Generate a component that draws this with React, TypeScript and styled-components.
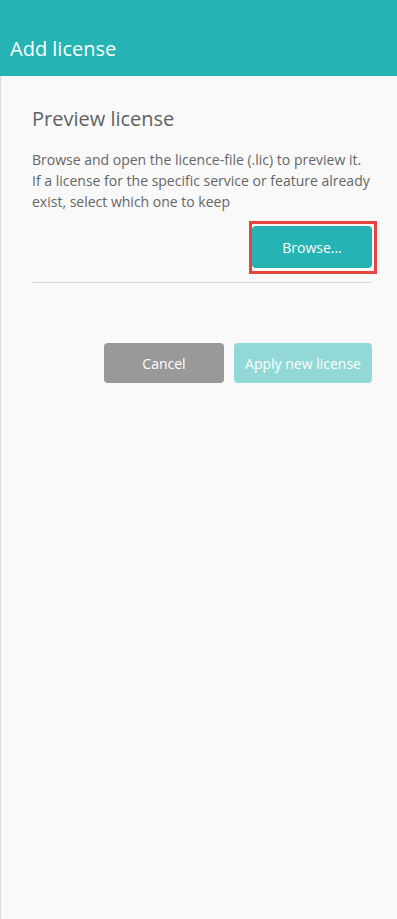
import React from "react";
import styled, { createGlobalStyle } from "styled-components";

const Global = createGlobalStyle`
  html, body { margin: 0; padding: 0; background: #f9f9f9; }
  body { font-family: "Open Sans", "Noto Sans", sans-serif; }
  * { box-sizing: border-box; }
`;

const Page = styled.div`
  display: flex;
  flex-direction: column;
  min-height: 919px;
`;

const Header = styled.header`
  height: 76px;
  background: #26b3b3;
  display: flex;
  align-items: flex-end;
  padding: 0 0 13px 10px;
`;

const Title = styled.h1`
  margin: 0;
  font-size: 20px;
  line-height: 28px;
  font-weight: 400;
  color: #ffffff;
`;

const Main = styled.main`
  flex: 1;
  background: #f9f9f9;
  border-left: 1px solid #dcdcdc;
  padding: 29px 25px 0 30px;
  display: flex;
  flex-direction: column;
`;

const Heading = styled.h2`
  margin: 0 0 0 1px;
  font-size: 20px;
  line-height: 28px;
  font-weight: 400;
  color: #5f6166;
`;

const Description = styled.p`
  margin: 16px 0 0 1px;
  font-size: 14px;
  line-height: 21px;
  color: #666666;
`;

const ActionRow = styled.div<{ $top: number }>`
  display: flex;
  justify-content: flex-end;
  gap: 10px;
  margin-top: ${(p) => p.$top}px;
`;

const Highlight = styled.div`
  border: 3px solid #e5453f;
  padding: 2px 2px 3px 0;
  margin-right: -5px;
  display: flex;
`;

const Button = styled.button<{ $variant: "primary" | "secondary" | "disabled"; $w: number; $h: number }>`
  width: ${(p) => p.$w}px;
  height: ${(p) => p.$h}px;
  border: none;
  border-radius: 4px;
  font-family: inherit;
  font-size: 14px;
  color: #ffffff;
  padding: 0;
  cursor: ${(p) => (p.$variant === "disabled" ? "default" : "pointer")};
  background: ${(p) =>
    p.$variant === "primary" ? "#26b3b3" : p.$variant === "secondary" ? "#999999" : "#91d8d6"};
`;

const Divider = styled.hr`
  margin: 8px 0 0 1px;
  border: none;
  border-top: 1px solid #d9d9d9;
  height: 0;
`;

export default function App() {
  return (
    <>
      <Global />
      <Page>
        <Header>
          <Title>Add license</Title>
        </Header>
        <Main>
          <Heading>Preview license</Heading>
          <Description>
            Browse and open the licence-file (.lic) to preview it.
            <br />
            If a license for the specific service or feature already exist, select which one to keep
          </Description>
          <ActionRow $top={9}>
            <Highlight>
              <Button $variant="primary" $w={120} $h={42}>
                Browse...
              </Button>
            </Highlight>
          </ActionRow>
          <Divider />
          <ActionRow $top={60}>
            <Button $variant="secondary" $w={120} $h={40}>
              Cancel
            </Button>
            <Button $variant="disabled" $w={138} $h={40} disabled>
              Apply new license
            </Button>
          </ActionRow>
        </Main>
      </Page>
    </>
  );
}
